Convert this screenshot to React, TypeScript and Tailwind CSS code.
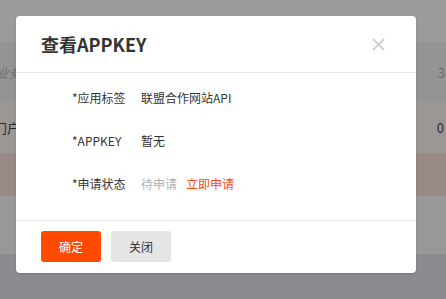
import React from 'react'

const font = { fontFamily: '"Noto Sans CJK SC", "Liberation Sans", sans-serif' }

export default function App() {
  const rows = [
    { label: '*应用标签', value: <span className="text-[#333]">联盟合作网站API</span> },
    { label: '*APPKEY', value: <span className="text-[#333]">暂无</span> },
    {
      label: '*申请状态',
      value: (
        <>
          <span className="text-[#b0b0b0]">待申请</span>
          <span className="ml-[9px] text-[#ff4a1a]">立即申请</span>
        </>
      ),
    },
  ]

  return (
    <div className="relative h-[299px] w-[446px] overflow-hidden" style={font}>
      {/* page behind the mask */}
      <div className="flex flex-col">
        <div className="h-[42px] bg-[#9b9b9b]" />
        <div className="flex h-[60px] items-center justify-between bg-[#949494] pt-[2px] text-[13px] text-[#6e6e6e]">
          <span className="-ml-[4px] italic">业务</span>
          <span className="mr-[1px]">3</span>
        </div>
        <div className="flex h-[51px] items-center justify-between bg-[#9a9795] text-[13px] text-[#2a2a2a]">
          <span className="-ml-[6px]">门户</span>
          <span className="mr-[2px]">0</span>
        </div>
        <div className="h-[43px] bg-[#9a8a86]" />
        <div className="h-[58px] bg-[#989898]" />
        <div className="h-[45px] bg-[#8b8c91]" />
      </div>

      {/* dialog */}
      <div className="absolute left-[16px] top-[16px] flex h-[257px] w-[400px] flex-col rounded-[4px] bg-white shadow-[0_1px_3px_rgba(0,0,0,0.15)]">
        <div className="flex h-[57px] items-center justify-between border-b border-[#e6e6e6] pl-[25px] pr-[31px]">
          <h2 className="text-[18px] font-bold text-[#333]">查看APPKEY</h2>
          <svg width="13" height="13" viewBox="0 0 13 13" fill="none">
            <path d="M1 1 L12 12 M12 1 L1 12" stroke="#c6c6c6" strokeWidth="1.6" />
          </svg>
        </div>

        <div className="flex flex-1 flex-col gap-[23px] pl-[56px] pt-[15px]">
          {rows.map((r) => (
            <div key={r.label} className="flex h-5 items-center text-[12px]">
              <span className="w-[69px] text-[#333]">{r.label}</span>
              <span className="flex items-center">{r.value}</span>
            </div>
          ))}
        </div>

        <div className="flex h-[53px] gap-[10px] border-t border-[#e6e6e6] pl-[25px] pt-[10px]">
          <button className="h-[31px] w-[60px] rounded-[3px] bg-[#ff4a00] text-[12px] text-white">确定</button>
          <button className="h-[31px] w-[60px] rounded-[3px] bg-[#e5e5e5] text-[12px] text-[#333]">关闭</button>
        </div>
      </div>
    </div>
  )
}
